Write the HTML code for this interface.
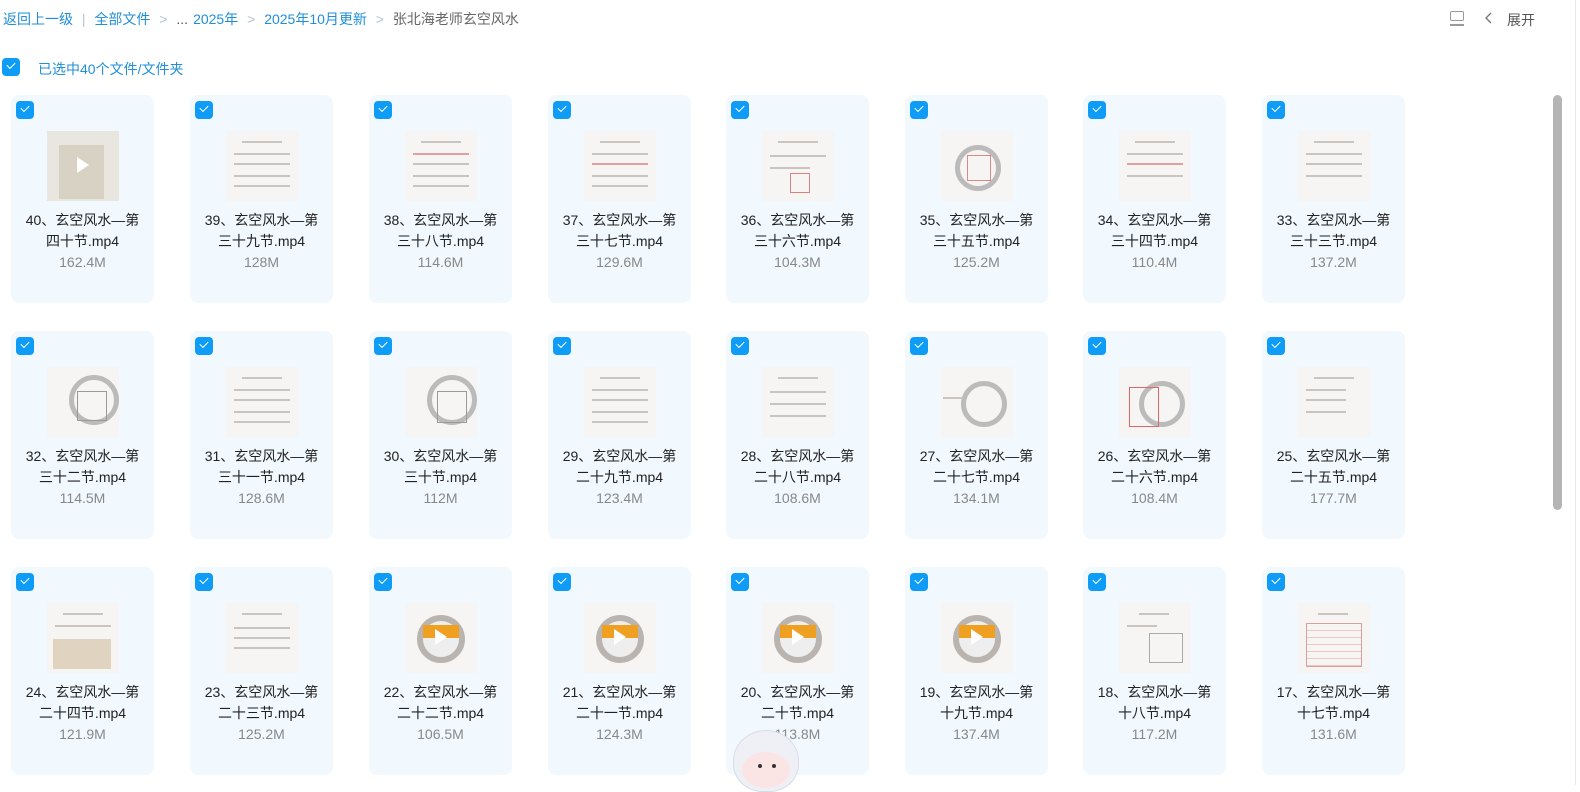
<!DOCTYPE html>
<html><head><meta charset="utf-8"><style>
*{margin:0;padding:0;box-sizing:border-box}
body{width:1580px;height:785px;overflow:hidden;background:#fff;font-family:"Liberation Sans","Noto Sans CJK SC",sans-serif;position:relative}
.bc{position:absolute;top:9px;left:3px;font-size:14px;color:#1f8fd8;white-space:nowrap}
.bc span{margin-right:5px}
.g{color:#b8c2cc}.k{color:#666}
.cb{position:absolute;width:18px;height:18px;border-radius:4px;background:#0e9cf6}
.cb:after{content:"";position:absolute;left:5px;top:4px;width:7px;height:4px;border-left:1.6px solid #fff;border-bottom:1.6px solid #fff;transform:rotate(-45deg)}
.sel{position:absolute;left:38px;top:59px;font-size:14px;color:#1f8fd8}
.card{position:absolute;width:143px;height:208px;background:#f1f8fe;border-radius:8px}
.card .cb{left:5px;top:6px}
.th{position:absolute;left:36px;top:36px;width:72px;height:70px;background:#f6f5f3;overflow:hidden}
.th i{position:absolute;left:8px;height:2px;background:#c9c4bf;display:block}
.nm{position:absolute;left:0;width:143px;top:115px;text-align:center;font-size:14px;line-height:21px;color:#222}
.sz{position:absolute;left:0;width:143px;top:157px;text-align:center;font-size:14px;line-height:21px;color:#888}
.wh{position:absolute;left:12px;top:12px;width:48px;height:48px;border-radius:50%;border:6px solid #b9b4b0;background:#eee}
.or{position:absolute;left:18px;top:22px;width:36px;height:13px;background:#f0a020}
.pl{position:absolute;left:30px;top:26px;width:0;height:0;border-left:12px solid #fff;border-top:8px solid transparent;border-bottom:8px solid transparent}
</style></head><body>
<div class="bc"><span>返回上一级</span> <span class="g">|</span> <span>全部文件</span> <span class="g">&gt;</span> <span style="color:#555">...</span><span>2025年</span> <span class="g">&gt;</span> <span>2025年10月更新</span> <span class="g">&gt;</span> <span class="k">张北海老师玄空风水</span></div>
<div style="position:absolute;left:1450px;top:11px;width:14px;height:10px;border:1.5px solid #999;border-radius:2px"></div>
<div style="position:absolute;left:1450px;top:24px;width:14px;height:1.5px;background:#999"></div>
<svg style="position:absolute;left:1484px;top:11px" width="10" height="14"><path d="M7 2 L2 7 L7 12" fill="none" stroke="#777" stroke-width="1.4"/></svg>
<div style="position:absolute;left:1507px;top:10px;font-size:14px;color:#555">展开</div>
<div style="position:absolute;left:1575px;top:0;width:1px;height:785px;background:#e6e9ee"></div>
<div style="position:absolute;left:1553px;top:95px;width:9px;height:415px;background:#b5b5b5;border-radius:5px"></div>
<div class="cb" style="left:2px;top:58px"></div>
<div class="sel">已选中40个文件/文件夹</div>

<!-- row 1 -->
<div class="card" style="left:11px;top:95px"><div class="cb"></div><div class="th" style="background:#e9e5df"><div style="position:absolute;left:12px;top:14px;width:45px;height:54px;background:#d8d2c4"></div><div class="pl" style="left:30px;top:26px"></div></div><div class="nm">40、玄空风水—第<br>四十节.mp4</div><div class="sz">162.4M</div></div>
<div class="card" style="left:190px;top:95px"><div class="cb"></div><div class="th"><i style="top:10px;width:40px;left:16px"></i><i style="top:22px;width:56px"></i><i style="top:32px;width:56px"></i><i style="top:44px;width:56px"></i><i style="top:54px;width:56px"></i></div><div class="nm">39、玄空风水—第<br>三十九节.mp4</div><div class="sz">128M</div></div>
<div class="card" style="left:369px;top:95px"><div class="cb"></div><div class="th"><i style="top:10px;width:40px;left:16px"></i><i style="top:22px;width:56px;background:#e0a0a0"></i><i style="top:32px;width:56px"></i><i style="top:44px;width:56px"></i><i style="top:54px;width:56px"></i></div><div class="nm">38、玄空风水—第<br>三十八节.mp4</div><div class="sz">114.6M</div></div>
<div class="card" style="left:548px;top:95px"><div class="cb"></div><div class="th"><i style="top:10px;width:40px;left:16px"></i><i style="top:22px;width:56px"></i><i style="top:32px;width:56px;background:#e0a0a0"></i><i style="top:44px;width:56px"></i><i style="top:54px;width:56px"></i></div><div class="nm">37、玄空风水—第<br>三十七节.mp4</div><div class="sz">129.6M</div></div>
<div class="card" style="left:726px;top:95px"><div class="cb"></div><div class="th"><i style="top:10px;width:40px;left:16px"></i><i style="top:24px;width:56px"></i><i style="top:36px;width:40px"></i><div style="position:absolute;left:28px;top:42px;width:20px;height:20px;border:1px solid #e08080"></div></div><div class="nm">36、玄空风水—第<br>三十六节.mp4</div><div class="sz">104.3M</div></div>
<div class="card" style="left:905px;top:95px"><div class="cb"></div><div class="th"><div style="position:absolute;left:14px;top:14px;width:46px;height:46px;border-radius:50%;border:5px solid #bbb"></div><div style="position:absolute;left:26px;top:24px;width:24px;height:26px;border:1px solid #d88"></div></div><div class="nm">35、玄空风水—第<br>三十五节.mp4</div><div class="sz">125.2M</div></div>
<div class="card" style="left:1083px;top:95px"><div class="cb"></div><div class="th"><i style="top:10px;width:40px;left:16px"></i><i style="top:22px;width:56px"></i><i style="top:32px;width:56px;background:#e0a0a0"></i><i style="top:44px;width:56px"></i></div><div class="nm">34、玄空风水—第<br>三十四节.mp4</div><div class="sz">110.4M</div></div>
<div class="card" style="left:1262px;top:95px"><div class="cb"></div><div class="th"><i style="top:10px;width:40px;left:16px"></i><i style="top:22px;width:56px"></i><i style="top:32px;width:56px"></i><i style="top:44px;width:56px"></i></div><div class="nm">33、玄空风水—第<br>三十三节.mp4</div><div class="sz">137.2M</div></div>

<!-- row 2 -->
<div class="card" style="left:11px;top:331px"><div class="cb"></div><div class="th"><div style="position:absolute;left:22px;top:8px;width:50px;height:50px;border-radius:50%;border:5px solid #bbb"></div><div style="position:absolute;left:30px;top:24px;width:30px;height:30px;border:1px solid #999"></div></div><div class="nm">32、玄空风水—第<br>三十二节.mp4</div><div class="sz">114.5M</div></div>
<div class="card" style="left:190px;top:331px"><div class="cb"></div><div class="th"><i style="top:10px;width:40px;left:16px"></i><i style="top:22px;width:56px"></i><i style="top:32px;width:56px"></i><i style="top:44px;width:56px"></i><i style="top:54px;width:56px"></i></div><div class="nm">31、玄空风水—第<br>三十一节.mp4</div><div class="sz">128.6M</div></div>
<div class="card" style="left:369px;top:331px"><div class="cb"></div><div class="th"><div style="position:absolute;left:22px;top:8px;width:50px;height:50px;border-radius:50%;border:5px solid #bbb"></div><div style="position:absolute;left:32px;top:24px;width:30px;height:32px;border:1px solid #999"></div></div><div class="nm">30、玄空风水—第<br>三十节.mp4</div><div class="sz">112M</div></div>
<div class="card" style="left:548px;top:331px"><div class="cb"></div><div class="th"><i style="top:10px;width:40px;left:16px"></i><i style="top:22px;width:56px"></i><i style="top:32px;width:56px"></i><i style="top:44px;width:56px"></i><i style="top:54px;width:56px"></i></div><div class="nm">29、玄空风水—第<br>二十九节.mp4</div><div class="sz">123.4M</div></div>
<div class="card" style="left:726px;top:331px"><div class="cb"></div><div class="th"><i style="top:10px;width:40px;left:16px"></i><i style="top:24px;width:56px"></i><i style="top:36px;width:56px"></i><i style="top:48px;width:56px"></i></div><div class="nm">28、玄空风水—第<br>二十八节.mp4</div><div class="sz">108.6M</div></div>
<div class="card" style="left:905px;top:331px"><div class="cb"></div><div class="th"><div style="position:absolute;left:20px;top:14px;width:46px;height:46px;border-radius:50%;border:5px solid #bbb"></div><i style="top:30px;width:20px;left:2px"></i></div><div class="nm">27、玄空风水—第<br>二十七节.mp4</div><div class="sz">134.1M</div></div>
<div class="card" style="left:1083px;top:331px"><div class="cb"></div><div class="th"><div style="position:absolute;left:20px;top:14px;width:46px;height:46px;border-radius:50%;border:5px solid #bbb"></div><div style="position:absolute;left:10px;top:20px;width:30px;height:40px;border:1px solid #d66"></div></div><div class="nm">26、玄空风水—第<br>二十六节.mp4</div><div class="sz">108.4M</div></div>
<div class="card" style="left:1262px;top:331px"><div class="cb"></div><div class="th"><i style="top:10px;width:40px;left:16px"></i><i style="top:22px;width:40px"></i><i style="top:32px;width:40px"></i><i style="top:44px;width:40px"></i></div><div class="nm">25、玄空风水—第<br>二十五节.mp4</div><div class="sz">177.7M</div></div>

<!-- row 3 -->
<div class="card" style="left:11px;top:567px"><div class="cb"></div><div class="th"><i style="top:10px;width:40px;left:16px"></i><i style="top:22px;width:56px"></i><div style="position:absolute;left:6px;top:36px;width:58px;height:30px;background:#e0d4c0"></div></div><div class="nm">24、玄空风水—第<br>二十四节.mp4</div><div class="sz">121.9M</div></div>
<div class="card" style="left:190px;top:567px"><div class="cb"></div><div class="th"><i style="top:10px;width:40px;left:16px"></i><i style="top:24px;width:56px"></i><i style="top:34px;width:56px"></i><i style="top:44px;width:56px"></i></div><div class="nm">23、玄空风水—第<br>二十三节.mp4</div><div class="sz">125.2M</div></div>
<div class="card" style="left:369px;top:567px"><div class="cb"></div><div class="th"><div class="wh"></div><div class="or"></div><div class="pl"></div></div><div class="nm">22、玄空风水—第<br>二十二节.mp4</div><div class="sz">106.5M</div></div>
<div class="card" style="left:548px;top:567px"><div class="cb"></div><div class="th"><div class="wh"></div><div class="or"></div><div class="pl"></div></div><div class="nm">21、玄空风水—第<br>二十一节.mp4</div><div class="sz">124.3M</div></div>
<div class="card" style="left:726px;top:567px"><div class="cb"></div><div class="th"><div class="wh"></div><div class="or"></div><div class="pl"></div></div><div class="nm">20、玄空风水—第<br>二十节.mp4</div><div class="sz">113.8M</div></div>
<div class="card" style="left:905px;top:567px"><div class="cb"></div><div class="th"><div class="wh"></div><div class="or"></div><div class="pl"></div></div><div class="nm">19、玄空风水—第<br>十九节.mp4</div><div class="sz">137.4M</div></div>
<div class="card" style="left:1083px;top:567px"><div class="cb"></div><div class="th"><i style="top:10px;width:30px;left:20px"></i><i style="top:22px;width:30px"></i><div style="position:absolute;left:30px;top:30px;width:34px;height:30px;border:1px solid #aaa"></div></div><div class="nm">18、玄空风水—第<br>十八节.mp4</div><div class="sz">117.2M</div></div>
<div class="card" style="left:1262px;top:567px"><div class="cb"></div><div class="th"><i style="top:10px;width:30px;left:20px"></i><div style="position:absolute;left:8px;top:20px;width:56px;height:44px;border:1px solid #d9a0a0;background:repeating-linear-gradient(#f6f5f3 0 6px,#e9c7c7 6px 7px)"></div></div><div class="nm">17、玄空风水—第<br>十七节.mp4</div><div class="sz">131.6M</div></div>

<!-- mascot -->
<div style="position:absolute;left:733px;top:730px;width:66px;height:62px;border-radius:50% 50% 45% 45%;background:#eef0f6;border:1px solid #d8dce6"></div>
<div style="position:absolute;left:742px;top:752px;width:48px;height:36px;border-radius:50%;background:#fbe4e4"></div>
<div style="position:absolute;left:758px;top:764px;width:4px;height:4px;border-radius:50%;background:#333"></div>
<div style="position:absolute;left:772px;top:764px;width:4px;height:4px;border-radius:50%;background:#333"></div>
</body></html>
